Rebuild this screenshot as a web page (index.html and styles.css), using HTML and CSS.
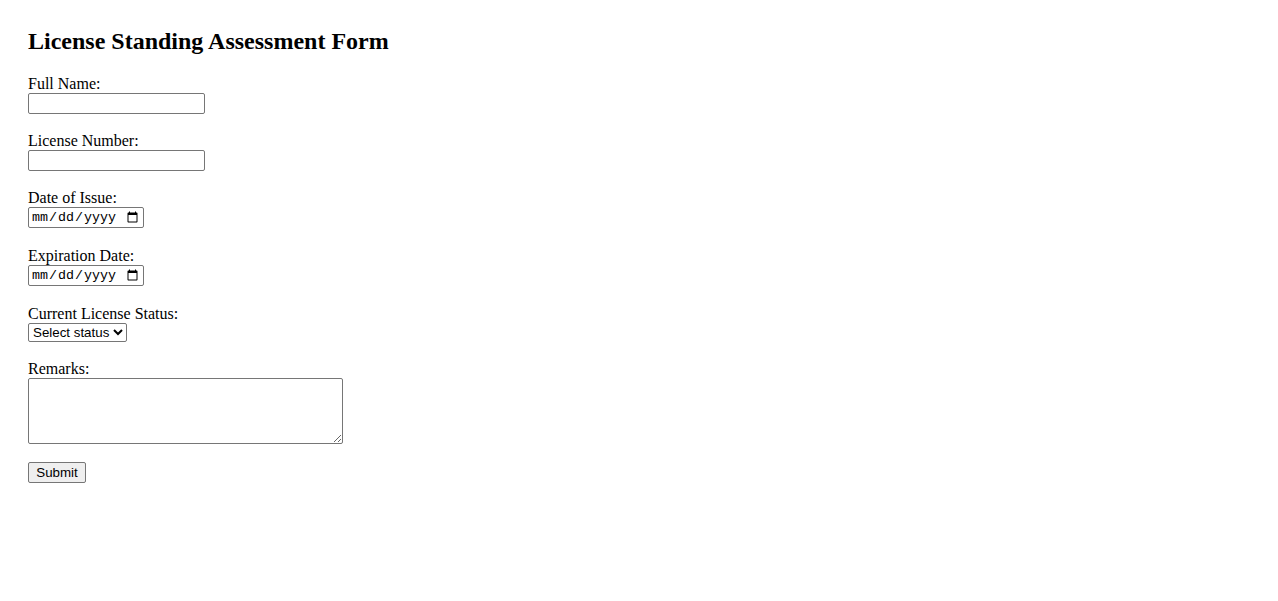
FILE: index.html
```html
<!DOCTYPE html>
<html lang="en">
  <head>
    <meta charset="UTF-8">
    <meta name="viewport" content="width=device-width, initial-scale=1.0">
    <title>License Standing Assessment Form</title>
    <link rel="stylesheet" href="styles.css">
  </head>
  <body>
    <h2 class="title">License Standing Assessment Form</h2>
    <form class="form">
      <label for="fullName">Full Name:</label><br>
      <input class="text-input" type="text" id="fullName" name="fullName"><br><br>

      <label for="licenseNumber">License Number:</label><br>
      <input class="text-input" type="text" id="licenseNumber" name="licenseNumber"><br><br>

      <label for="issueDate">Date of Issue:</label><br>
      <input class="date-input" type="date" id="issueDate" name="issueDate"><br><br>

      <label for="expDate">Expiration Date:</label><br>
      <input class="date-input" type="date" id="expDate" name="expDate"><br><br>

      <label for="status">Current License Status:</label><br>
      <select class="status-select" id="status" name="status">
        <option value="">Select status</option>
        <option value="active">Active</option>
        <option value="suspended">Suspended</option>
        <option value="expired">Expired</option>
        <option value="revoked">Revoked</option>
      </select><br><br>

      <label for="remarks">Remarks:</label><br>
      <textarea class="remarks" id="remarks" name="remarks"></textarea><br><br>

      <button class="submit-btn" type="submit">Submit</button>
    </form>
  </body>
</html>
```
FILE: styles.css
```css
body {
  margin: 0;
  padding: 28px;
  font-family: "Liberation Serif", "Times New Roman", serif;
  font-size: 16px;
  color: #000;
  background: #fff;
}

.title {
  margin: 0 0 20px;
  font-size: 24px;
  font-weight: bold;
}

.form label {
  font-size: 16px;
}

.text-input {
  box-sizing: border-box;
  width: 177px;
  height: 21px;
  margin: 0;
  padding: 1px 2px;
  border: 1px solid #767676;
  border-radius: 2px;
  font-family: "Liberation Sans", Arial, sans-serif;
  font-size: 13.33px;
}

.date-input {
  box-sizing: border-box;
  width: 116px;
  height: 21px;
  margin: 0 0 1px;
  padding: 1px 2px;
  border: 1px solid #767676;
  border-radius: 2px;
  font-family: "Liberation Mono", "Courier New", monospace;
  font-size: 13.33px;
}

.status-select {
  box-sizing: border-box;
  width: 99px;
  height: 19px;
  margin: 0;
  border: 1px solid #767676;
  border-radius: 2px;
  font-family: "Liberation Sans", Arial, sans-serif;
  font-size: 13.33px;
  background: #fff;
}

.remarks {
  box-sizing: border-box;
  width: 315px;
  height: 66px;
  margin: 0;
  border: 1px solid #767676;
  border-radius: 2px;
  vertical-align: bottom;
  font-family: "Liberation Mono", monospace;
  font-size: 13.33px;
}

.submit-btn {
  box-sizing: border-box;
  width: 58px;
  height: 21px;
  margin: 0;
  padding: 1px 6px;
  border: 1px solid #767676;
  border-radius: 2px;
  background: #efefef;
  font-family: "Liberation Sans", Arial, sans-serif;
  font-size: 13.33px;
  color: #000;
}
```
